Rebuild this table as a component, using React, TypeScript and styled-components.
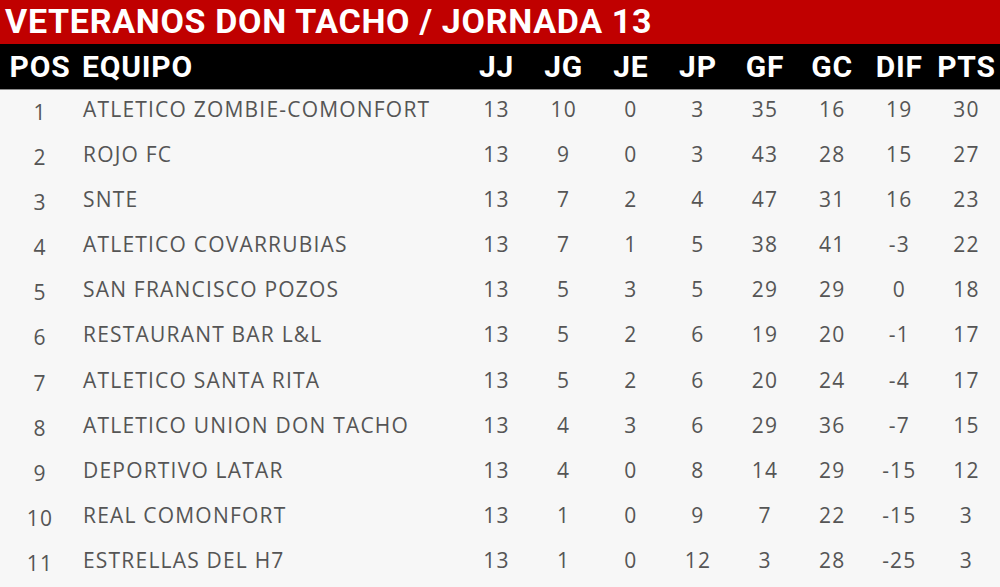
import styled, { createGlobalStyle } from "styled-components";

type Team = {
  name: string;
  jj: number;
  jg: number;
  je: number;
  jp: number;
  gf: number;
  gc: number;
};

const teams: Team[] = [
  { name: "ATLETICO ZOMBIE-COMONFORT", jj: 13, jg: 10, je: 0, jp: 3, gf: 35, gc: 16 },
  { name: "ROJO FC", jj: 13, jg: 9, je: 0, jp: 3, gf: 43, gc: 28 },
  { name: "SNTE", jj: 13, jg: 7, je: 2, jp: 4, gf: 47, gc: 31 },
  { name: "ATLETICO COVARRUBIAS", jj: 13, jg: 7, je: 1, jp: 5, gf: 38, gc: 41 },
  { name: "SAN FRANCISCO POZOS", jj: 13, jg: 5, je: 3, jp: 5, gf: 29, gc: 29 },
  { name: "RESTAURANT BAR L&L", jj: 13, jg: 5, je: 2, jp: 6, gf: 19, gc: 20 },
  { name: "ATLETICO SANTA RITA", jj: 13, jg: 5, je: 2, jp: 6, gf: 20, gc: 24 },
  { name: "ATLETICO UNION DON TACHO", jj: 13, jg: 4, je: 3, jp: 6, gf: 29, gc: 36 },
  { name: "DEPORTIVO LATAR", jj: 13, jg: 4, je: 0, jp: 8, gf: 14, gc: 29 },
  { name: "REAL COMONFORT", jj: 13, jg: 1, je: 0, jp: 9, gf: 7, gc: 22 },
  { name: "ESTRELLAS DEL H7", jj: 13, jg: 1, je: 0, jp: 12, gf: 3, gc: 28 },
];

const columns = ["JJ", "JG", "JE", "JP", "GF", "GC", "DIF", "PTS"];

const GlobalStyle = createGlobalStyle`
  html, body {
    margin: 0;
    padding: 0;
    background: #f7f7f7;
  }
`;

const Page = styled.main`
  width: 1000px;
  height: 587px;
  display: flex;
  flex-direction: column;
  background: #f7f7f7;
  overflow: hidden;
`;

const Title = styled.h1`
  margin: 0;
  height: 44px;
  box-sizing: border-box;
  display: flex;
  align-items: center;
  padding: 0 0 3px 5px;
  background: #c00000;
  color: #fff;
  font-family: Roboto, "Liberation Sans", sans-serif;
  font-weight: 700;
  font-size: 34px;
  letter-spacing: 0.7px;
  white-space: nowrap;
`;

const Grid = styled.div`
  display: grid;
  grid-template-columns: 80px 383px repeat(8, 1fr);
  align-items: center;
`;

const HeadRow = styled(Grid)`
  height: 45px;
  background: #000;
  border-bottom: 1px solid #8c8c8c;
  color: #fff;
  font-family: Roboto, "Liberation Sans", sans-serif;
  font-weight: 700;
  font-size: 30px;
  letter-spacing: 0.8px;
`;

const HeadCell = styled.div<{ $left?: boolean }>`
  text-align: ${(p) => (p.$left ? "left" : "center")};
  padding-left: ${(p) => (p.$left ? "2px" : "0")};
  white-space: nowrap;
`;

const Body = styled.div`
  flex: 1;
  display: grid;
  grid-auto-rows: 1fr;
`;

const Row = styled(Grid)`
  color: #555;
  font-family: "Open Sans", sans-serif;
  font-size: 21px;
  letter-spacing: 1.2px;
  padding-bottom: 8px;
`;

const Cell = styled.div<{ $left?: boolean; $drop?: boolean }>`
  text-align: ${(p) => (p.$left ? "left" : "center")};
  padding-left: ${(p) => (p.$left ? "3px" : "0")};
  transform: translateY(${(p) => (p.$drop ? "3px" : "0")});
  white-space: nowrap;
`;

export default function App() {
  return (
    <Page>
      <GlobalStyle />
      <Title>VETERANOS DON TACHO / JORNADA 13</Title>
      <HeadRow>
        <HeadCell>POS</HeadCell>
        <HeadCell $left>EQUIPO</HeadCell>
        {columns.map((c) => (
          <HeadCell key={c}>{c}</HeadCell>
        ))}
      </HeadRow>
      <Body>
        {teams.map((t, i) => {
          const dif = t.gf - t.gc;
          const pts = t.jg * 3 + t.je;
          return (
            <Row key={t.name}>
              <Cell $drop>{i + 1}</Cell>
              <Cell $left>{t.name}</Cell>
              <Cell>{t.jj}</Cell>
              <Cell>{t.jg}</Cell>
              <Cell>{t.je}</Cell>
              <Cell>{t.jp}</Cell>
              <Cell>{t.gf}</Cell>
              <Cell>{t.gc}</Cell>
              <Cell>{dif}</Cell>
              <Cell>{pts}</Cell>
            </Row>
          );
        })}
      </Body>
    </Page>
  );
}
